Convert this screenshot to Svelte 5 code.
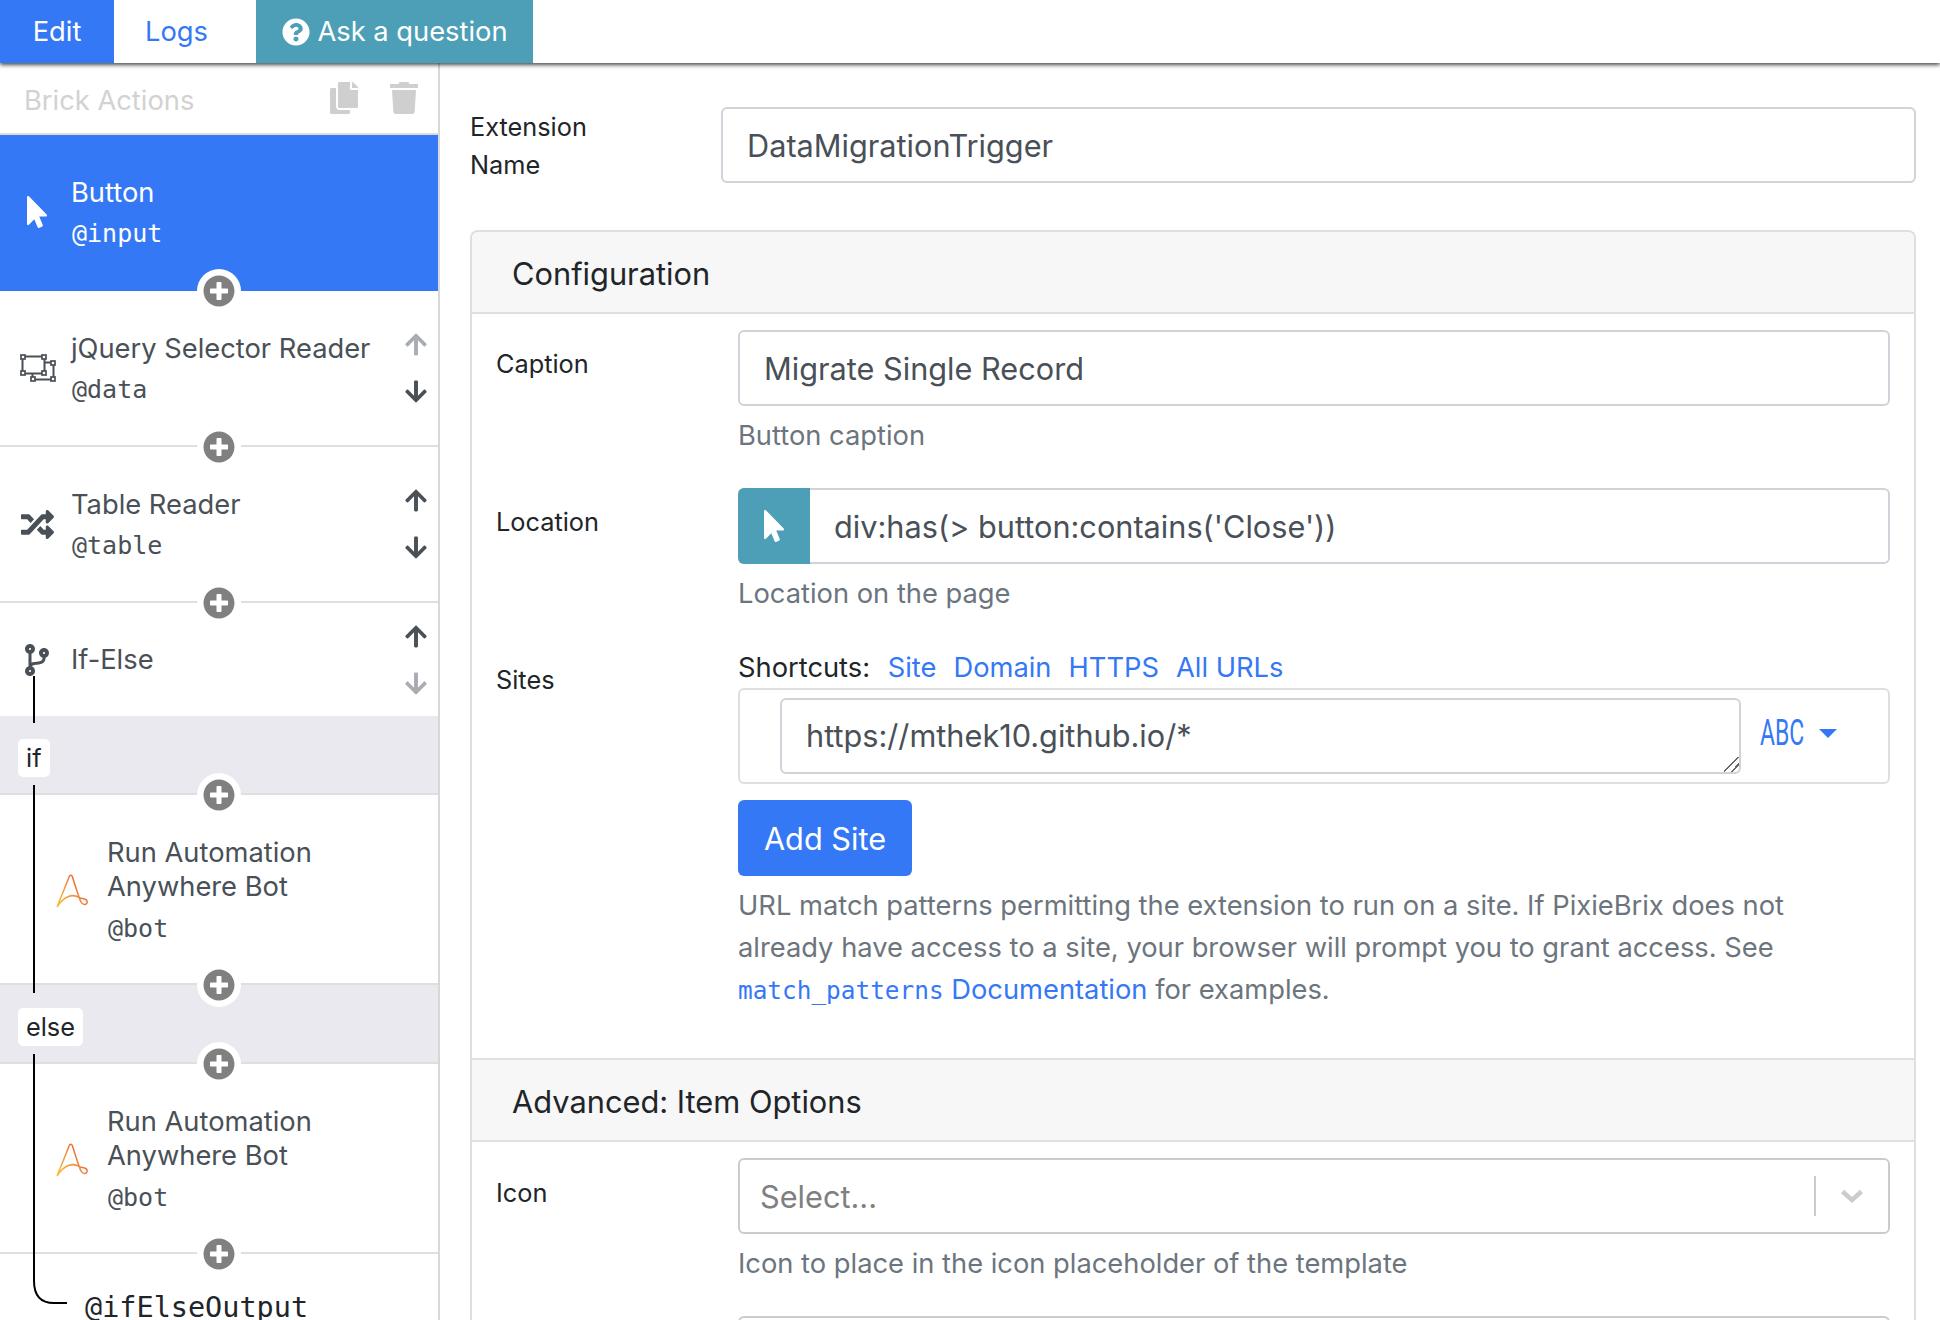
<script>
  const icons = {
    pointer: ['0 0 320 512', 'M302.189 329.126H196.105l55.831 135.993c3.889 9.428-.555 19.999-9.444 23.999l-49.165 21.427c-9.165 4-19.443-.571-23.332-9.714l-53.053-129.136-86.664 89.138C18.729 472.71 0 463.554 0 447.977V18.299C0 1.899 19.921-6.096 30.277 5.443l284.412 292.542c11.472 11.179 3.007 31.141-12.5 31.141z'],
    copy: ['0 0 448 512', 'M320 448v40c0 13.255-10.745 24-24 24H24c-13.255 0-24-10.745-24-24V120c0-13.255 10.745-24 24-24h72v296c0 30.879 25.121 56 56 56h168zm0-344V0H152c-13.255 0-24 10.745-24 24v368c0 13.255 10.745 24 24 24h272c13.255 0 24-10.745 24-24V128H344c-13.2 0-24-10.8-24-24zm120.971-31.029L375.029 7.029A24 24 0 0 0 358.059 0H352v96h96v-6.059a24 24 0 0 0-7.029-16.97z'],
    trash: ['0 0 448 512', 'M432 32H312l-9.4-18.7A24 24 0 0 0 281.1 0H166.8a23.72 23.72 0 0 0-21.4 13.3L136 32H16A16 16 0 0 0 0 48v32a16 16 0 0 0 16 16h416a16 16 0 0 0 16-16V48a16 16 0 0 0-16-16zM53.2 467a48 48 0 0 0 47.9 45h245.8a48 48 0 0 0 47.9-45L416 128H32z'],
    question: ['0 0 512 512', 'M504 256c0 136.997-111.043 248-248 248S8 392.997 8 256C8 119.083 119.043 8 256 8s248 111.083 248 248zM262.655 90c-54.497 0-89.255 22.957-116.549 63.758-3.536 5.286-2.353 12.415 2.715 16.258l34.699 26.31c5.205 3.947 12.621 3.008 16.665-2.122 17.864-22.658 30.113-35.797 57.303-35.797 20.429 0 45.698 13.148 45.698 32.958 0 14.976-12.363 22.667-32.534 33.976C247.128 238.528 216 254.941 216 296v4c0 6.627 5.373 12 12 12h56c6.627 0 12-5.373 12-12v-1.333c0-28.462 83.186-29.647 83.186-106.667 0-58.002-60.165-102-116.531-102zM256 338c-25.365 0-46 20.635-46 46 0 25.364 20.635 46 46 46s46-20.636 46-46c0-25.365-20.635-46-46-46z'],
    plus: ['0 0 512 512', 'M256 8C119 8 8 119 8 256s111 248 248 248 248-111 248-248S393 8 256 8zm144 276c0 6.6-5.4 12-12 12h-92v92c0 6.6-5.4 12-12 12h-56c-6.6 0-12-5.4-12-12v-92h-92c-6.6 0-12-5.4-12-12v-56c0-6.6 5.4-12 12-12h92v-92c0-6.6 5.4-12 12-12h56c6.6 0 12 5.4 12 12v92h92c6.6 0 12 5.4 12 12v56z'],
    up: ['0 0 448 512', 'M34.9 289.5l-22.2-22.2c-9.4-9.4-9.4-24.6 0-33.9L207 39c9.4-9.4 24.6-9.4 33.9 0l194.3 194.3c9.4 9.4 9.4 24.6 0 33.9L413 289.4c-9.5 9.5-25 9.3-34.3-.4L264 168.6V456c0 13.3-10.7 24-24 24h-32c-13.3 0-24-10.7-24-24V168.6L69.2 289.1c-9.3 9.8-24.8 10-34.3.4z'],
    down: ['0 0 448 512', 'M413.1 222.5l22.2 22.2c9.4 9.4 9.4 24.6 0 33.9L241 473c-9.4 9.4-24.6 9.4-33.9 0L12.7 278.6c-9.4-9.4-9.4-24.6 0-33.9l22.2-22.2c9.5-9.5 25-9.3 34.3.4L184 343.4V56c0-13.3 10.7-24 24-24h32c13.3 0 24 10.7 24 24v287.4l114.8-120.5c9.3-9.8 24.8-10 34.3-.4z'],
    random: ['0 0 512 512', 'M504.971 359.029c9.373 9.373 9.373 24.569 0 33.941l-80 79.984c-15.01 15.01-40.971 4.49-40.971-16.971V416h-58.785a12.004 12.004 0 0 1-8.773-3.812l-70.556-75.596 53.333-57.143L352 336h32v-39.981c0-21.438 25.943-31.998 40.971-16.971l80 79.981zM12 176h84l52.781 56.551 53.333-57.143-70.556-75.596A11.999 11.999 0 0 0 122.785 96H12c-6.627 0-12 5.373-12 12v56c0 6.627 5.373 12 12 12zm372 0v39.984c0 21.46 25.961 31.98 40.971 16.971l80-79.984c9.373-9.373 9.373-24.569 0-33.941l-80-79.981C409.943 24.021 384 34.582 384 56.019V96h-58.785a12.004 12.004 0 0 0-8.773 3.812L96 336H12c-6.627 0-12 5.373-12 12v56c0 6.627 5.373 12 12 12h110.785c3.326 0 6.503-1.381 8.773-3.812L352 176h32z'],
    branch: ['0 0 384 512', 'M384 144c0-44.2-35.8-80-80-80s-80 35.8-80 80c0 36.4 24.3 67.1 57.5 76.8-.6 16.1-4.2 28.5-11 36.9-15.4 19.2-49.3 22.4-85.2 25.7-28.2 2.6-57.4 5.4-81.3 16.9v-144c32.5-10.2 56-40.5 56-76.3 0-44.2-35.8-80-80-80S0 35.8 0 80c0 35.8 23.5 66.1 56 76.3v199.3C23.5 365.9 0 396.2 0 432c0 44.2 35.8 80 80 80s80-35.8 80-80c0-34-21.2-63.1-51.2-74.6 3.1-5.2 7.8-9.8 14.9-13.4 16.2-8.2 40.4-10.4 66.1-12.8 42.2-3.9 90-8.4 118.2-43.4 14-17.4 21.1-39.8 21.6-67.9 31.6-10.8 54.4-40.7 54.4-75.9zM80 64c8.8 0 16 7.2 16 16s-7.2 16-16 16-16-7.2-16-16 7.2-16 16-16zm0 384c-8.8 0-16-7.2-16-16s7.2-16 16-16 16 7.2 16 16-7.2 16-16 16zm224-320c8.8 0 16 7.2 16 16s-7.2 16-16 16-16-7.2-16-16 7.2-16 16-16z']
  };

  const bricks = [
    { kind: 'active', icon: 'pointer', title: 'Button', out: '@input' },
    { kind: 'std', icon: 'group', title: 'jQuery Selector Reader', out: '@data', up: 'off', down: 'on' },
    { kind: 'std', icon: 'random', title: 'Table Reader', out: '@table', up: 'on', down: 'on' },
    { kind: 'short', icon: 'branch', title: 'If-Else', up: 'on', down: 'off', noAdd: true },
    { kind: 'label', label: 'if' },
    { kind: 'nested', icon: 'aa', title: 'Run Automation Anywhere Bot', out: '@bot' },
    { kind: 'label', label: 'else' },
    { kind: 'nested', icon: 'aa', title: 'Run Automation Anywhere Bot', out: '@bot' }
  ];
</script>

{#snippet fa(name, cls)}
  <svg class={cls} viewBox={icons[name][0]} aria-hidden="true"><path fill="currentColor" d={icons[name][1]} /></svg>
{/snippet}

<div class="page">
  <nav class="tabs">
    <a class="tab edit" href="#edit">Edit</a>
    <a class="tab logs" href="#logs">Logs</a>
    <a class="tab ask" href="#ask">{@render fa('question', 'ask-icon')} Ask a question</a>
  </nav>

  <div class="body">
    <aside class="sidebar">
      <div class="actions">
        <span class="actions-title">Brick Actions</span>
        {@render fa('copy', 'action-icon')}
        {@render fa('trash', 'action-icon')}
      </div>

      <div class="bricks">
        <!-- pipeline connector for the if/else branches -->
        <svg class="tree" width="90" height="1200" aria-hidden="true">
          <path d="M34 541V588M34 650V858M34 919V1146Q34 1168 54 1168H67" fill="none" stroke="#000" stroke-width="2" />
        </svg>

        {#each bricks as b}
          <div class="brick {b.kind}">
            {#if b.kind === 'label'}
              <span class="pill">{b.label}</span>
            {:else}
              <span class="brick-icon">
                {#if b.icon === 'group'}
                  <svg class="i-group" viewBox="0 0 36 28" aria-hidden="true">
                    <g fill="none" stroke="#495057" stroke-width="2">
                      <rect x="2.5" y="2.5" width="22" height="17" />
                      <path d="M24.5 8.5H33.5V25.5H12.5V19.5" />
                    </g>
                    <g fill="#fff" stroke="#495057" stroke-width="1.7">
                      <rect x="1" y="1" width="4" height="4" />
                      <rect x="22" y="1" width="4" height="4" />
                      <rect x="1" y="17" width="4" height="4" />
                      <rect x="22" y="17" width="4" height="4" />
                      <rect x="31" y="7" width="4" height="4" />
                      <rect x="31" y="23" width="4" height="4" />
                      <rect x="11" y="23" width="4" height="4" />
                    </g>
                  </svg>
                {:else if b.icon === 'aa'}
                  <svg class="i-aa" viewBox="0 0 33 34" aria-hidden="true">
                    <defs>
                      <linearGradient id="aa-grad" x1="0" y1="1" x2="1" y2="0.3">
                        <stop offset="0" stop-color="#f9c13a" />
                        <stop offset="0.55" stop-color="#ef8f3f" />
                        <stop offset="1" stop-color="#e0552f" />
                      </linearGradient>
                    </defs>
                    <path d="M1 33C4 25 11 9 13 3C14 0.5 15.5 0.5 16.5 3C19 11 23 24 25 28C27 32 32 31 31 27C30 24 26 25 24 24C17 19 8 22 1 33Z" fill="none" stroke="url(#aa-grad)" stroke-width="1.5" />
                  </svg>
                {:else}
                  {@render fa(b.icon, 'i-' + b.icon)}
                {/if}
              </span>
              <div class="brick-text">
                <div class="brick-title">{b.title}</div>
                {#if b.out}<code class="brick-out">{b.out}</code>{/if}
              </div>
              {#if b.up}
                <div class="move">
                  {@render fa('up', 'arrow ' + b.up)}
                  {@render fa('down', 'arrow ' + b.down)}
                </div>
              {/if}
            {/if}
            {#if !b.noAdd}
              <span class="add">{@render fa('plus', 'add-icon')}</span>
            {/if}
          </div>
        {/each}

        <div class="output"><code>@ifElseOutput</code></div>
      </div>
    </aside>

    <main class="editor">
      <div class="name-row">
        <label for="ext-name">Extension Name</label>
        <input id="ext-name" class="control" value="DataMigrationTrigger" />
      </div>

      <section class="card">
        <h2 class="card-head">Configuration</h2>
        <div class="card-body">
          <div class="row">
            <span class="row-label">Caption</span>
            <div>
              <input class="control" value="Migrate Single Record" />
              <p class="help">Button caption</p>
            </div>
          </div>
          <div class="row">
            <span class="row-label">Location</span>
            <div>
              <div class="group">
                <span class="group-btn">{@render fa('pointer', 'group-icon')}</span>
                <input class="group-input" value="div:has(> button:contains('Close'))" />
              </div>
              <p class="help">Location on the page</p>
            </div>
          </div>
          <div class="row low">
            <span class="row-label">Sites</span>
            <div>
              <div class="shortcuts">
                Shortcuts:
                <a href="#site">Site</a><a href="#domain">Domain</a><a href="#https">HTTPS</a><a href="#all">All URLs</a>
              </div>
              <div class="sites-box">
                <textarea class="control site-area" rows="1">https://mthek10.github.io/*</textarea>
                <span class="abc">ABC</span>
                <span class="caret"></span>
              </div>
              <button class="add-site" type="button">Add Site</button>
              <p class="help long">
                URL match patterns permitting the extension to run on a site. If PixieBrix does not<br />
                already have access to a site, your browser will prompt you to grant access. See<br />
                <a href="#docs"><code>match_patterns</code> Documentation</a> for examples.
              </p>
            </div>
          </div>
        </div>

        <h2 class="card-head second">Advanced: Item Options</h2>
        <div class="card-body adv">
          <div class="row low">
            <span class="row-label">Icon</span>
            <div>
              <div class="select">
                <span class="select-value">Select...</span>
                <span class="select-sep"></span>
                <svg class="chevron" viewBox="0 0 24 14" aria-hidden="true"><path d="M2.5 2.5L12 11L21.5 2.5" fill="none" stroke="#ccc" stroke-width="4.5" /></svg>
              </div>
              <p class="help">Icon to place in the icon placeholder of the template</p>
              <div class="select next"></div>
            </div>
          </div>
        </div>
      </section>
    </main>
  </div>
</div>

<style>
  :global(body) {
    margin: 0;
    background: #fff;
    font-family: Inter, "Noto Sans", sans-serif;
  }
  * { box-sizing: border-box; }
  code { font-family: "DejaVu Sans Mono", monospace; }

  .page {
    height: 1320px;
    overflow: hidden;
    display: flex;
    flex-direction: column;
    color: #212529;
  }

  .tabs {
    display: flex;
    height: 63px;
    flex: none;
    position: relative;
    z-index: 3;
    background: #fff;
    box-shadow: 0 2px 4px rgba(0, 0, 0, 0.7);
    font-size: 27.3px;
  }
  .tab {
    display: flex;
    align-items: center;
    justify-content: center;
    text-decoration: none;
  }
  .edit { width: 114px; background: #3578f6; color: #fff; }
  .logs { width: 142px; color: #3578f6; padding-right: 17px; }
  .ask { width: 277px; background: #4c9fb6; color: #fff; gap: 7px; padding-left: 1px; }
  :global(.ask-icon) { width: 28px; height: 28px; }

  .body { flex: 1; display: flex; min-height: 0; }

  .sidebar {
    width: 440px;
    flex: none;
    border-right: 2px solid #d8d8d8;
  }
  .actions {
    height: 72px;
    border-bottom: 2px solid #dcdcdc;
    display: flex;
    align-items: center;
    padding: 4px 20px 0 24px;
    gap: 32px;
    color: #cfcfcf;
  }
  .actions-title { flex: 1; font-size: 27.3px; color: #d2d2d2; }
  :global(.action-icon) { width: 28px; height: 32px; margin-bottom: 4px; }

  .bricks { position: relative; }
  .tree { position: absolute; left: 0; top: 0; z-index: 1; pointer-events: none; }

  .brick {
    position: relative;
    display: flex;
    align-items: center;
    border-bottom: 2px solid #dfdfdf;
    color: #495057;
    padding-left: 20px;
  }
  .active { height: 156px; background: #3578f6; color: #fff; border-bottom: 0; padding-bottom: 2px; }
  .std { height: 156px; }
  .short { height: 113px; border-bottom: 0; }
  .label { height: 79px; background: #e9e9ef; padding: 7px 0 0 18px; }
  .nested { height: 190px; padding-left: 56px; }

  .brick-icon {
    width: 51px;
    flex: none;
    display: flex;
    justify-content: flex-start;
    align-items: center;
  }
  :global(.i-pointer) { width: 20px; height: 32px; margin-left: 7px; }
  :global(.i-random) { width: 33px; height: 33px; margin-left: 1px; }
  :global(.i-branch) { width: 24px; height: 32px; margin-left: 5px; }
  .i-group { width: 36px; height: 28px; }
  .i-aa { width: 33px; height: 34px; margin-top: 3px; }

  .brick-text { flex: 1; min-width: 0; }
  .nested .brick-text { padding-top: 1px; }
  .brick-title { font-size: 27.3px; line-height: 34px; }
  .nested .brick-title { width: 300px; }
  .brick-out { display: block; font-size: 25px; line-height: 30px; margin-top: 9px; padding-left: 1px; }
  .nested .brick-out { margin-top: 10px; }

  .move {
    width: 44px;
    display: flex;
    flex-direction: column;
    align-items: center;
    gap: 22px;
  }
  :global(.arrow) { width: 22px; height: 25px; display: block; }
  :global(.arrow.off) { color: #a9adb1; }

  .pill {
    background: #fff;
    border-radius: 5px;
    font-size: 25.3px;
    line-height: 38px;
    padding: 0 8px;
    color: #212529;
    position: relative;
    z-index: 2;
  }

  .add {
    position: absolute;
    left: 197px;
    bottom: -24px;
    width: 44px;
    height: 44px;
    border-radius: 50%;
    background: #fff;
    display: flex;
    align-items: center;
    justify-content: center;
    color: #808080;
    z-index: 2;
  }
  .active .add { bottom: -22px; }
  :global(.add-icon) { width: 32px; height: 32px; }

  .output { padding: 37px 0 0 85px; }
  .output code { font-size: 28.5px; line-height: 34px; color: #212529; }

  .editor { flex: 1; min-width: 0; padding: 44px 24px 0 30px; }

  .name-row {
    display: grid;
    grid-template-columns: 251px 1fr;
    grid-template-rows: 76px;
    align-items: center;
  }
  .name-row label { font-size: 25.3px; line-height: 38px; width: 130px; margin-top: 2px; }

  .control {
    display: block;
    width: 100%;
    height: 76px;
    border: 2px solid #ced4da;
    border-radius: 6px;
    padding: 0 24px;
    font: 30.7px Inter, "Noto Sans", sans-serif;
    color: #495057;
    background: #fff;
    outline: none;
  }

  .card {
    margin-top: 47px;
    border: 2px solid #dfdfdf;
    border-radius: 8px 8px 0 0;
    border-bottom: 0;
  }
  .card-head {
    margin: 0;
    height: 82px;
    display: flex;
    align-items: center;
    padding: 2px 0 0 40px;
    background: #f7f7f7;
    border-bottom: 2px solid #dfdfdf;
    font-size: 30.8px;
    font-weight: 400;
    border-radius: 6px 6px 0 0;
  }
  .card-head.second { height: 84px; border-top: 2px solid #dfdfdf; border-radius: 0; }
  .card-body { padding: 16px 24px 46px; }
  .card-body.adv { padding-bottom: 0; }

  .row { display: grid; grid-template-columns: 242px 1fr; margin-bottom: 33px; }
  .row + .row { margin-bottom: 32px; }
  .row:last-child { margin-bottom: 0; }
  .row-label { font-size: 25.3px; line-height: 38px; padding-top: 15px; height: 53px; }
  .row.low .row-label { padding-top: 16px; height: 54px; }

  .help { margin: 11px 0 0; font-size: 27.3px; line-height: 38px; color: #6c757d; }
  .help.long { margin-top: 9px; line-height: 42px; }
  .help a { color: #3578f6; text-decoration: none; }
  .help code { font-size: 24.4px; }

  .group {
    display: flex;
    height: 76px;
    border: 2px solid #ced4da;
    border-left: 0;
    border-radius: 6px;
  }
  .group-btn {
    width: 72px;
    margin: -2px 0;
    flex: none;
    background: #4c9fb6;
    border-radius: 6px 0 0 6px;
    color: #fff;
    display: flex;
    align-items: center;
    justify-content: center;
  }
  :global(.group-icon) { width: 20px; height: 32px; }
  .group-input {
    flex: 1;
    min-width: 0;
    border: 0;
    outline: none;
    background: none;
    padding: 0 24px;
    font: 30.7px Inter, "Noto Sans", sans-serif;
    color: #495057;
  }

  .shortcuts { font-size: 27.3px; line-height: 42px; height: 43px; padding-top: 2px; }
  .shortcuts a { color: #3578f6; text-decoration: none; margin-left: 17px; }
  .shortcuts a:first-child { margin-left: 10px; }

  .sites-box {
    height: 96px;
    border: 2px solid #dfdfdf;
    border-radius: 6px;
    display: flex;
    align-items: center;
    padding-left: 40px;
    color: #3578f6;
  }
  .site-area {
    width: 961px;
    flex: none;
    padding-top: 17px;
    line-height: 38px;
    resize: both;
    overflow: hidden;
  }
  .site-area::-webkit-resizer {
    background: linear-gradient(135deg, transparent 45%, #666 45% 53%, transparent 53% 70%, #666 70% 78%, transparent 78%);
  }
  .abc {
    display: inline-block;
    margin-left: 19px;
    font: 37px Roboto, "Liberation Sans", sans-serif;
    line-height: 40px;
    width: 43px;
    transform: scaleX(0.62);
    transform-origin: left center;
    margin-bottom: 6px;
  }
  .caret {
    width: 0;
    height: 0;
    margin: 0 0 6px 16px;
    border-left: 9px solid transparent;
    border-right: 9px solid transparent;
    border-top: 9px solid #3578f6;
  }

  .add-site {
    display: block;
    margin-top: 16px;
    width: 174px;
    height: 76px;
    border: 0;
    border-radius: 6px;
    background: #3578f6;
    color: #fff;
    font: 30.7px Inter, "Noto Sans", sans-serif;
  }

  .select {
    height: 76px;
    border: 2px solid #ccc;
    border-radius: 6px;
    display: flex;
    align-items: center;
    padding: 0 24px 0 20px;
  }
  .select-value { flex: 1; font-size: 30.7px; color: #808080; }
  .select-sep { width: 2px; height: 40px; background: #ccc; margin-right: 24px; }
  .chevron { width: 24px; height: 14px; }
  .select.next { margin-top: 33px; }
</style>
